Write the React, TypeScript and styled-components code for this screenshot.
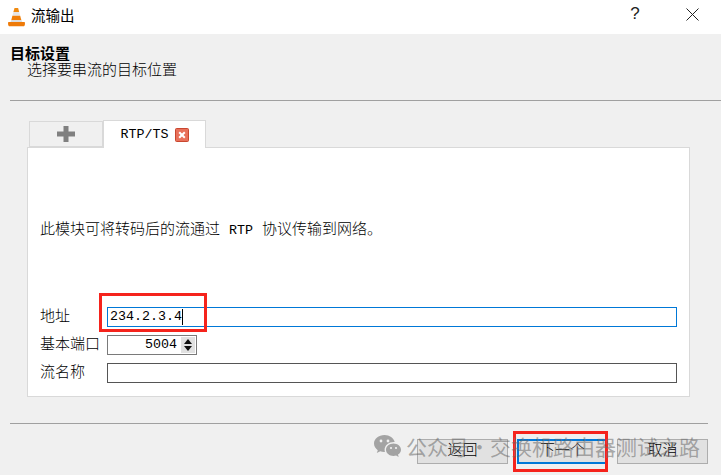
import React from "react"
import styled, { createGlobalStyle } from "styled-components"

const cjk = `"Liberation Mono", "Noto Sans CJK SC", monospace`

const GlobalStyle = createGlobalStyle`
  html, body {
    margin: 0;
    padding: 0;
    background: #f0f0f0;
  }
`

const Dialog = styled.div`
  position: relative;
  width: 721px;
  height: 475px;
  overflow: hidden;
  background: #f0f0f0;
  color: #000;
  font-family: ${cjk};
  font-size: 15px;
  font-weight: 300;
  line-height: 16px;
`

const TitleBar = styled.div`
  height: 34px;
  background: #fff;
  display: flex;
  align-items: center;
  padding-left: 7px;
`

const TitleText = styled.span`
  margin-left: 5px;
  font-size: 14.5px;
  font-weight: 400;
  flex: 1;
`

const TitleButton = styled.div`
  width: 30px;
  height: 30px;
  display: flex;
  align-items: center;
  justify-content: center;
  font-family: "Liberation Sans", sans-serif;
  font-size: 17px;
  font-weight: 400;
  color: #222;
`

const TitleButtons = styled.div`
  display: flex;
  gap: 27px;
  margin: 0 14px 6px 0;
`

const Header = styled.div`
  height: 66px;
  padding: 13px 0 0 10px;
  box-sizing: border-box;
`

const HeaderTitle = styled.div`
  font-weight: 700;
  font-size: 15px;
  line-height: 17px;
`

const HeaderSub = styled.div`
  padding-left: 17px;
  font-size: 15px;
`

const Rule = styled.hr<{ $end?: number }>`
  height: 1px;
  border: 0;
  margin: 0 ${(p) => p.$end ?? 0}px 0 10px;
  background: #a0a0a0;
`

const TabBar = styled.div`
  display: flex;
  align-items: flex-end;
  height: 28px;
  margin: 18px 0 0 29px;
  position: relative;
  z-index: 1;
`

const Tab = styled.div<{ $active?: boolean }>`
  box-sizing: border-box;
  display: flex;
  align-items: center;
  justify-content: center;
  gap: 6px;
  width: ${(p) => (p.$active ? 103 : 74)}px;
  height: ${(p) => (p.$active ? 28 : 26)}px;
  margin-bottom: ${(p) => (p.$active ? -1 : 0)}px;
  background: ${(p) => (p.$active ? "#fff" : "#f0f0f0")};
  border: 1px solid #d9d9d9;
  border-bottom: ${(p) => (p.$active ? "0" : "1px solid #d9d9d9")};
`

const Latin = styled.span`
  font-size: 13.33px;
  font-weight: 400;
  line-height: 16px;
`

const Pane = styled.div`
  box-sizing: border-box;
  width: 663px;
  height: 250px;
  margin-left: 27px;
  background: #fff;
  border: 1px solid #d9d9d9;
  padding: 0 12px 13px;
  display: flex;
  flex-direction: column;
  justify-content: space-between;
`

const Description = styled.div`
  margin-top: 74px;
  line-height: 18px;
`

const Form = styled.div`
  display: grid;
  grid-template-columns: 67px 1fr;
  grid-auto-rows: 20px;
  row-gap: 8px;
  align-items: center;
`

const FieldLabel = styled.span`
  padding-top: 2px;
`

const Field = styled.div<{ $focus?: boolean }>`
  box-sizing: border-box;
  height: 20px;
  background: #fff;
  border: 1px solid ${(p) => (p.$focus ? "#0078d7" : "#555")};
  display: flex;
  align-items: center;
  padding-left: 2px;
`

const Caret = styled.span`
  width: 1px;
  height: 16px;
  background: #000;
`

const Spin = styled.div`
  box-sizing: border-box;
  width: 90px;
  height: 20px;
  border: 1px solid #7a7a7a;
  display: flex;
  align-items: center;
  justify-content: flex-end;
`

const SpinArrows = styled.div`
  width: 14px;
  height: 16px;
  margin: 0 1px 0 4px;
  background: #e1e1e1;
  display: flex;
  flex-direction: column;
  align-items: center;
  justify-content: center;
  gap: 2px;
`

const Arrow = styled.span<{ $up?: boolean }>`
  width: 0;
  height: 0;
  border-left: 4px solid transparent;
  border-right: 4px solid transparent;
  ${(p) => (p.$up ? "border-bottom: 5px solid #111;" : "border-top: 5px solid #111;")}
`

const Footer = styled.div`
  margin-top: 26px;
`

const Buttons = styled.div`
  display: flex;
  justify-content: flex-end;
  gap: 9px;
  margin: 15px 13px 0 0;
`

const Button = styled.div<{ $default?: boolean }>`
  box-sizing: border-box;
  width: 91px;
  height: 25px;
  background: #e1e1e1;
  border: ${(p) => (p.$default ? "2px solid #0078d7" : "1px solid #adadad")};
  display: flex;
  align-items: center;
  justify-content: center;
`

const Highlight = styled.div<{ $x: number; $y: number; $w: number; $h: number }>`
  position: absolute;
  left: ${(p) => p.$x}px;
  top: ${(p) => p.$y}px;
  width: ${(p) => p.$w}px;
  height: ${(p) => p.$h}px;
  box-sizing: border-box;
  border: 3px solid #f5231c;
`

const Watermark = styled.div`
  position: absolute;
  left: 374px;
  top: 434px;
  display: flex;
  align-items: center;
  gap: 5px;
  font-family: "Noto Sans CJK SC", sans-serif;
  font-size: 21px;
  line-height: 25px;
  font-weight: 400;
  color: rgba(105, 105, 105, 0.55);
  white-space: nowrap;
  pointer-events: none;
`

const ConeIcon = () => (
  <svg width="19" height="20" viewBox="0 0 19 20">
    <path d="M7.5 1h3.6l1.1 4H6.4z" fill="#f08a10" />
    <path d="M6.4 5h5.8l1 3.8H5.4z" fill="#e6e6e6" />
    <path d="M5.4 8.8h7.8l1.1 4.2H4.3z" fill="#f07f0a" />
    <path d="M4.4 13h10l1 2.2H3.4z" fill="#dcdcdc" />
    <path d="M1.5 15h16c.6 0 .8 3.6-.5 4.2H2C.7 18.6.9 15 1.5 15z" fill="#ee7a08" />
  </svg>
)

const CloseIcon = () => (
  <svg width="13" height="13" viewBox="0 0 13 13">
    <path d="M.5.5l12 12M12.5.5l-12 12" stroke="#222" strokeWidth="1" />
  </svg>
)

const PlusIcon = () => (
  <svg width="18" height="16" viewBox="0 0 18 16">
    <path d="M6.5 0h5v5.500H18v5h-6.500V16h-5v-5.500H0v-5h6.500z" fill="#808080" />
  </svg>
)

const TabCloseIcon = () => (
  <svg width="14" height="14" viewBox="0 0 14 14">
    <rect x="0.5" y="0.5" width="13" height="13" rx="1" fill="#e8705a" stroke="#c9472f" />
    <path d="M4.2 4.2l5.6 5.6M9.8 4.2l-5.6 5.6" stroke="#fff" strokeWidth="2" />
  </svg>
)

const WeChatIcon = () => (
  <svg width="27" height="23" viewBox="0 0 27 23">
    <path
      d="M10.500 0C4.700 0 0 3.800 0 8.600c0 2.700 1.500 5 3.800 6.600L2.800 18l3.400-1.700c1.200.4 2.600.6 4 .6h.7a7 7 0 0 1-.3-2.100c0-4.300 4.200-7.700 9.300-7.700h.8C19.700 3 15.500 0 10.500 0z"
      fill="#a3a3a3"
    />
    <circle cx="7" cy="6" r="1.400" fill="#f0f0f0" />
    <circle cx="14" cy="6" r="1.400" fill="#f0f0f0" />
    <path
      d="M19.500 8.500c-4.100 0-7.500 2.800-7.500 6.200s3.400 6.200 7.500 6.200c.9 0 1.800-.1 2.600-.4l2.600 1.500-.7-2.400c1.800-1.200 3-2.900 3-4.900 0-3.400-3.400-6.200-7.500-6.200z"
      fill="#a3a3a3"
    />
    <circle cx="17" cy="13" r="1.100" fill="#f0f0f0" />
    <circle cx="22" cy="13" r="1.100" fill="#f0f0f0" />
  </svg>
)

const App: React.FC = () => {
  return (
    <Dialog>
      <GlobalStyle />
      <TitleBar>
        <ConeIcon />
        <TitleText>流输出</TitleText>
        <TitleButtons>
          <TitleButton>?</TitleButton>
          <TitleButton>
            <CloseIcon />
          </TitleButton>
        </TitleButtons>
      </TitleBar>

      <Header>
        <HeaderTitle>目标设置</HeaderTitle>
        <HeaderSub>选择要串流的目标位置</HeaderSub>
      </Header>
      <Rule />

      <TabBar>
        <Tab>
          <PlusIcon />
        </Tab>
        <Tab $active>
          <Latin>RTP/TS</Latin>
          <TabCloseIcon />
        </Tab>
      </TabBar>

      <Pane>
        <Description>
          此模块可将转码后的流通过 <Latin>RTP</Latin> 协议传输到网络。
        </Description>
        <Form>
          <FieldLabel>地址</FieldLabel>
          <Field $focus>
            <Latin>234.2.3.4</Latin>
            <Caret />
          </Field>
          <FieldLabel>基本端口</FieldLabel>
          <Spin>
            <Latin>5004</Latin>
            <SpinArrows>
              <Arrow $up />
              <Arrow />
            </SpinArrows>
          </Spin>
          <FieldLabel>流名称</FieldLabel>
          <Field />
        </Form>
      </Pane>

      <Footer>
        <Rule $end={13} />
        <Buttons>
          <Button>返回</Button>
          <Button $default>下一个</Button>
          <Button>取消</Button>
        </Buttons>
      </Footer>

      <Highlight $x={99} $y={293} $w={108} $h={39} />
      <Highlight $x={513} $y={431} $w={95} $h={41} />
      <Watermark>
        <WeChatIcon />
        <span>公众号·交换机路由器测试之路</span>
      </Watermark>
    </Dialog>
  )
}

export default App
